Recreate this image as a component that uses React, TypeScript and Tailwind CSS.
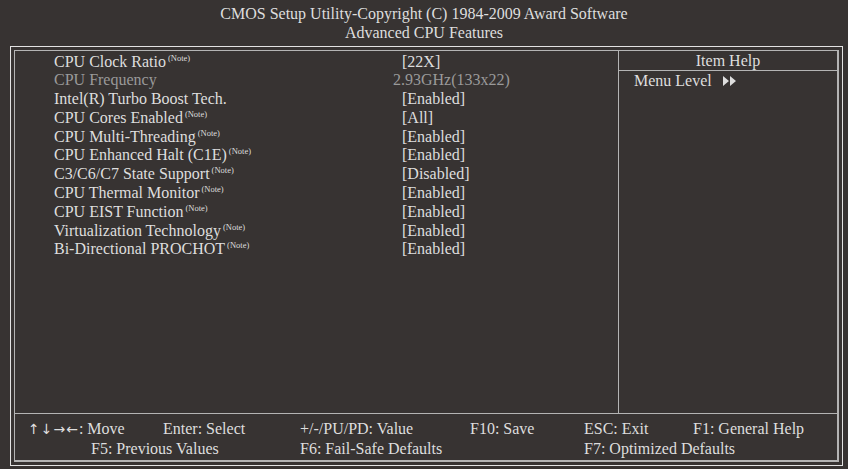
const items: { label: string; value: string; note?: boolean; dim?: boolean }[] = [
  { label: "CPU Clock Ratio", value: "[22X]", note: true },
  { label: "CPU Frequency", value: "2.93GHz(133x22)", dim: true },
  { label: "Intel(R) Turbo Boost Tech.", value: "[Enabled]" },
  { label: "CPU Cores Enabled", value: "[All]", note: true },
  { label: "CPU Multi-Threading", value: "[Enabled]", note: true },
  { label: "CPU Enhanced Halt (C1E)", value: "[Enabled]", note: true },
  { label: "C3/C6/C7 State Support", value: "[Disabled]", note: true },
  { label: "CPU Thermal Monitor", value: "[Enabled]", note: true },
  { label: "CPU EIST Function", value: "[Enabled]", note: true },
  { label: "Virtualization Technology", value: "[Enabled]", note: true },
  { label: "Bi-Directional PROCHOT", value: "[Enabled]", note: true },
];

function Note() {
  return <span className="ml-[2px] align-[6px] text-[8.5px] leading-none">(Note)</span>;
}

export default function App() {
  return (
    <div className="h-[469px] w-[848px] overflow-hidden bg-[#373332] font-['Liberation_Serif',serif] text-[16px] text-[#dedede]">
      <div className="h-[46px] pt-[4px] text-center leading-[19px]">
        <div>CMOS Setup Utility-Copyright (C) 1984-2009 Award Software</div>
        <div>Advanced CPU Features</div>
      </div>

      <div className="ml-[10px] h-[420px] w-[833px] border border-[#e2e2e2] p-[3px]">
        <div className="flex h-full flex-col border border-r-2 border-b-2 border-[#b4b4b4]">
          <div className="flex h-[363px] border-b border-[#b4b4b4]">
            <div className="w-[604px] border-r border-[#b4b4b4] pt-[1.5px] pl-[39px] leading-[18.8px]">
              {items.map((it) => (
                <div key={it.label} className={"flex " + (it.dim ? "text-[#9a9a9a]" : "")}>
                  <div className="w-[348px]">
                    {it.label}
                    {it.note && <Note />}
                  </div>
                  <div className={it.dim ? "-ml-[9px]" : ""}>{it.value}</div>
                </div>
              ))}
            </div>
            <div className="flex-1">
              <div className="h-[20px] border-b border-[#b4b4b4] text-center leading-[19px]">Item Help</div>
              <div className="flex items-center pl-[15px] leading-[19px]">
                <span>Menu Level</span>
                <svg className="ml-[11px]" width="14" height="10" viewBox="0 0 14 10">
                  <path d="M0 0 L6 5 L0 10 Z M7 0 L13 5 L7 10 Z" fill="#dedede" />
                </svg>
              </div>
            </div>
          </div>

          <div className="pt-[5px] leading-[19px]">
            <div className="flex pl-[13px]">
              <span className="w-[135px]">
                <span className="font-['DejaVu_Sans',sans-serif] text-[14px] tracking-[1px]">↑↓→←</span>: Move
              </span>
              <span className="w-[137px]">Enter: Select</span>
              <span className="w-[170px]">+/-/PU/PD: Value</span>
              <span className="w-[114px]">F10: Save</span>
              <span className="w-[109px]">ESC: Exit</span>
              <span>F1: General Help</span>
            </div>
            <div className="flex pl-[76px]">
              <span className="w-[209px]">F5: Previous Values</span>
              <span className="w-[284px]">F6: Fail-Safe Defaults</span>
              <span>F7: Optimized Defaults</span>
            </div>
          </div>
        </div>
      </div>
    </div>
  );
}
